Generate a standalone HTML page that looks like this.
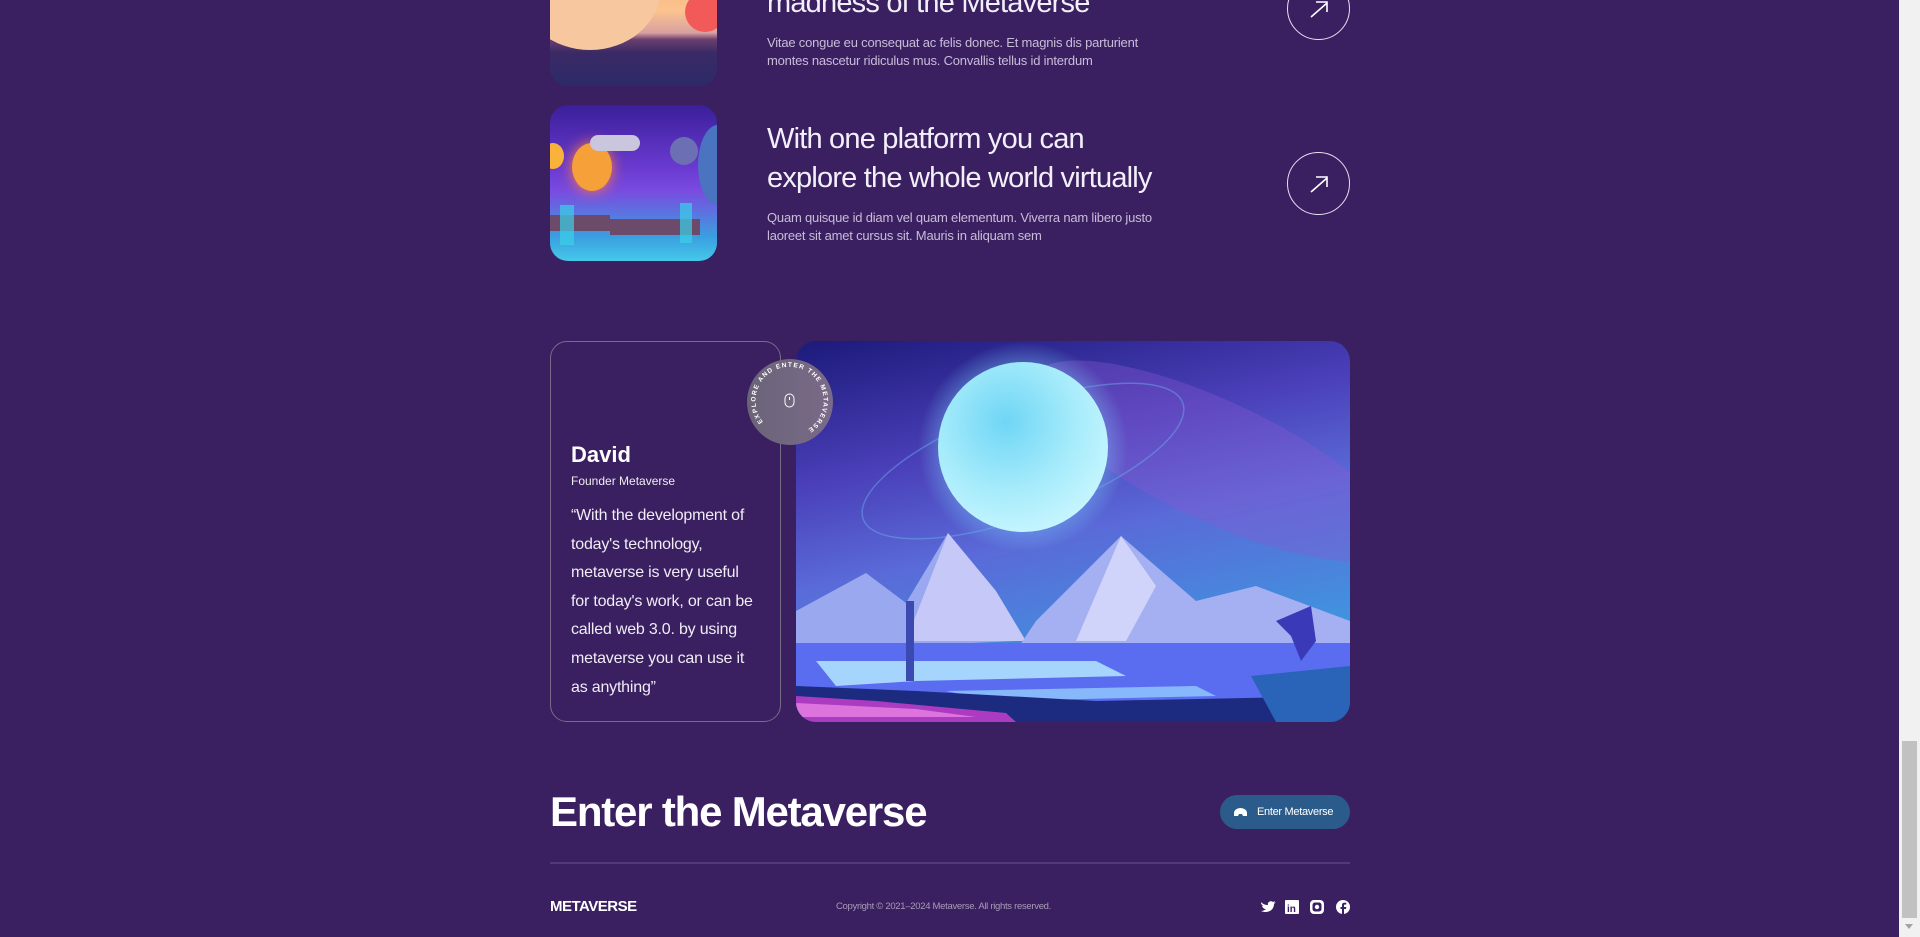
<!DOCTYPE html>
<html><head><meta charset="utf-8"><style>
*{margin:0;padding:0;box-sizing:border-box}
body{width:1920px;height:937px;overflow:hidden;background:#3a2060;font-family:"Liberation Sans",sans-serif;color:#fff;position:relative}
.abs{position:absolute}
.h{font-size:29px;line-height:39px;color:#f3effa;letter-spacing:-0.8px}
.d{font-size:13px;line-height:18px;color:#c9bcd9;letter-spacing:-0.2px}
.arrow{width:63px;height:63px;border:1.3px solid #e8e0f0;border-radius:50%}
.arrow svg{position:absolute;left:19px;top:19px}
.quote{font-size:16px;line-height:28.6px;color:#f0ecf5;letter-spacing:-0.2px}
</style></head><body>
<div class="abs" style="left:550px;top:-80px;width:167px;height:166px;border-radius:18px;overflow:hidden;background:linear-gradient(180deg,#f6a36c 0%,#fbc38e 55%,#d8a0a0 68%,#6a3f6e 72%,#3a2a66 80%,#2d2a6a 100%)">
<div class="abs" style="left:-30px;top:10px;width:140px;height:120px;border-radius:50%;background:#f7c7a0"></div>
<div class="abs" style="left:135px;top:72px;width:40px;height:40px;border-radius:50%;background:#f25a5a"></div>
</div>
<div class="abs h" style="left:767px;top:-16px">madness of the Metaverse</div>
<div class="abs d" style="left:767px;top:34px">Vitae congue eu consequat ac felis donec. Et magnis dis parturient<br>montes nascetur ridiculus mus. Convallis tellus id interdum</div>
<div class="abs arrow" style="left:1287px;top:-23px"><svg width="24" height="24" viewBox="0 0 24 24"><path d="M4 20L20 6M9 5h11v10" stroke="#fff" stroke-width="1.6" fill="none"/></svg></div>
<div class="abs" style="left:550px;top:105px;width:167px;height:156px;border-radius:18px;overflow:hidden;background:linear-gradient(180deg,#3a1f9a 0%,#6a3ad0 40%,#7a4be0 55%,#3aa0e0 85%,#45c8ea 100%)">
<div class="abs" style="left:22px;top:38px;width:40px;height:48px;border-radius:50%;background:#f6a03a;box-shadow:0 0 14px #ff7a3a"></div>
<div class="abs" style="left:-8px;top:38px;width:22px;height:26px;border-radius:50%;background:#f9b23a"></div>
<div class="abs" style="left:120px;top:32px;width:28px;height:28px;border-radius:50%;background:#6d6fb5"></div>
<div class="abs" style="left:148px;top:20px;width:40px;height:80px;border-radius:50%;background:#4a73c0"></div>
<div class="abs" style="left:40px;top:30px;width:50px;height:16px;background:#c9c6de;border-radius:8px"></div>
<div class="abs" style="left:0;top:110px;width:60px;height:16px;background:#6c4a6a"></div>
<div class="abs" style="left:60px;top:114px;width:90px;height:16px;background:#6c4a6a"></div>
<div class="abs" style="left:10px;top:100px;width:14px;height:40px;background:#3ad0e8;opacity:.7"></div>
<div class="abs" style="left:130px;top:98px;width:12px;height:40px;background:#3ad0e8;opacity:.7"></div>
</div>
<div class="abs h" style="left:767px;top:120px">With one platform you can<br>explore the whole world virtually</div>
<div class="abs d" style="left:767px;top:209px">Quam quisque id diam vel quam elementum. Viverra nam libero justo<br>laoreet sit amet cursus sit. Mauris in aliquam sem</div>
<div class="abs arrow" style="left:1287px;top:152px"><svg width="24" height="24" viewBox="0 0 24 24"><path d="M4 20L20 6M9 5h11v10" stroke="#fff" stroke-width="1.6" fill="none"/></svg></div>
<div class="abs" style="left:550px;top:341px;width:231px;height:381px;border:1px solid #7a6a8a;border-radius:17px"></div>
<div class="abs" style="left:571px;top:442px;font-size:22px;font-weight:bold">David</div>
<div class="abs" style="left:571px;top:474px;font-size:12px;color:#eee">Founder Metaverse</div>
<div class="abs quote" style="left:571px;top:502px">“With the development of<br>today's technology,<br>metaverse is very useful<br>for today's work, or can be<br>called web 3.0. by using<br>metaverse you can use it<br>as anything”</div>
<div class="abs" style="left:796px;top:341px;width:554px;height:381px;border-radius:20px;overflow:hidden">
<svg width="554" height="381" viewBox="0 0 554 381">
<defs>
<linearGradient id="sky" x1="0" y1="0" x2="0.3" y2="1"><stop offset="0" stop-color="#1c1a7a"/><stop offset="0.35" stop-color="#4a3fb8"/><stop offset="0.6" stop-color="#5a6ad8"/><stop offset="1" stop-color="#3c9ae0"/></linearGradient>
<radialGradient id="pl" cx="0.4" cy="0.35" r="0.7"><stop offset="0" stop-color="#6fd6f5"/><stop offset="0.6" stop-color="#a8ecfb"/><stop offset="1" stop-color="#c8f6ff"/></radialGradient>
<radialGradient id="glow"><stop offset="0.6" stop-color="#7fd8ff" stop-opacity="0.6"/><stop offset="1" stop-color="#7fd8ff" stop-opacity="0"/></radialGradient>
</defs>
<rect width="554" height="381" fill="url(#sky)"/>
<ellipse cx="420" cy="120" rx="200" ry="60" fill="#8a5ad0" opacity="0.35" transform="rotate(25 420 120)"/>
<circle cx="227" cy="106" r="105" fill="url(#glow)"/>
<ellipse cx="227" cy="120" rx="170" ry="55" fill="none" stroke="#6aa8e8" stroke-width="1.5" opacity="0.5" transform="rotate(-20 227 120)"/>
<circle cx="227" cy="106" r="85" fill="url(#pl)"/>
<polygon points="0,270 70,232 110,262 152,192 220,300 0,310" fill="#9aa8f0"/>
<polygon points="110,300 152,192 200,250 230,300" fill="#c6c8f8"/>
<polygon points="240,280 325,195 400,260 460,245 554,280 554,310 220,310" fill="#a5b0f2"/>
<polygon points="280,300 325,195 360,245 330,300" fill="#d0d3fa"/>
<rect y="302" width="554" height="79" fill="#5a6cf0"/>
<polygon points="20,320 300,320 330,335 120,340 40,345" fill="#b8f0ff" opacity="0.8"/>
<polygon points="150,350 400,345 420,355 200,360" fill="#9ad8ff" opacity="0.7"/>
<polygon points="0,345 120,350 300,360 554,355 554,381 0,381" fill="#1c2a80"/>
<polygon points="0,355 80,360 210,372 220,381 0,381" fill="#d040d0" opacity="0.8"/>
<polygon points="0,362 120,368 180,376 0,376" fill="#ff9af0" opacity="0.6"/>
<polygon points="480,280 515,265 520,300 505,320 495,295" fill="#3a3ab8"/>
<polygon points="455,335 554,325 554,381 480,381" fill="#2a64b8"/>
<rect x="110" y="260" width="8" height="80" fill="#3a4ab0"/>
</svg></div>
<div class="abs" style="left:747px;top:359px;width:86px;height:86px;border-radius:50%;background:linear-gradient(90deg,#6a6478,#7a6a88)">
<svg width="86" height="86" viewBox="0 0 86 86"><defs><path id="c" d="M43,43 m-27,20 a34,34 0 1,1 40,10"/></defs>
<text font-size="6.5" fill="#fff" letter-spacing="1.2" font-family="Liberation Sans" font-weight="bold"><textPath href="#c">EXPLORE AND ENTER THE METAVERSE</textPath></text>
<rect x="38" y="35" width="9" height="13" rx="4.5" fill="none" stroke="#fff" stroke-width="1"/><line x1="42.5" y1="38" x2="42.5" y2="41" stroke="#fff"/></svg></div>
<div class="abs" style="left:550px;top:788px;font-size:42px;font-weight:bold;letter-spacing:-1.2px">Enter the Metaverse</div>
<div class="abs" style="left:1220px;top:795px;width:130px;height:34px;border-radius:17px;background:#2b5b8b;font-size:11px;line-height:34px;padding-left:37px;letter-spacing:-0.3px">Enter Metaverse</div>
<svg class="abs" style="left:1233px;top:806px" width="15" height="12" viewBox="0 0 15 12"><path d="M1 7a6.5 5 0 0 1 13 0v3h-4l-1-2h-3l-1 2H1z" fill="#fff"/></svg>
<div class="abs" style="left:550px;top:862px;width:800px;height:2px;background:#54397a"></div>
<div class="abs" style="left:550px;top:898px;font-size:15px;font-weight:bold;letter-spacing:-0.5px">METAVERSE</div>
<div class="abs" style="left:836px;top:901px;font-size:9.5px;color:#a89cb8;letter-spacing:-0.3px">Copyright © 2021–2024 Metaverse. All rights reserved.</div>
<svg class="abs" style="left:1260px;top:899px" width="90" height="16" viewBox="0 0 90 16">
<path d="M1 3c2 2 4 3 7 3-1-3 3-5 5-3l2-1-1 2 2-1-2 2c0 6-6 10-13 7 2 0 4-1 5-2-2 0-3-1-4-3h2C2 7 1 5 1 3z" fill="#fff"/>
<rect x="25" y="1" width="14" height="14" rx="1" fill="#fff"/><text x="27" y="13" font-size="10" font-weight="bold" fill="#3a2060" font-family="Liberation Sans">in</text>
<rect x="50" y="1" width="14" height="14" rx="4" fill="#fff"/><rect x="52.5" y="3.5" width="9" height="9" rx="2.5" fill="#3a2060"/><circle cx="57" cy="8" r="2.2" fill="#fff"/>
<circle cx="83" cy="8" r="7" fill="#fff"/><path d="M84 15v-5h2l.3-2H84V6.5c0-.6.3-1 1-1h1.3V3.8H84.5c-1.8 0-2.5 1-2.5 2.5V8h-1.5v2H82v5z" fill="#3a2060"/></svg>
<div class="abs" style="left:1899px;top:0;width:21px;height:937px;background:#f1f1f1"></div>
<div class="abs" style="left:1902px;top:741px;width:15px;height:177px;background:#c1c1c1"></div>
<div class="abs" style="left:1905px;top:924px;width:0;height:0;border-left:4px solid transparent;border-right:4px solid transparent;border-top:5px solid #a3a3a3"></div>
</body></html>
